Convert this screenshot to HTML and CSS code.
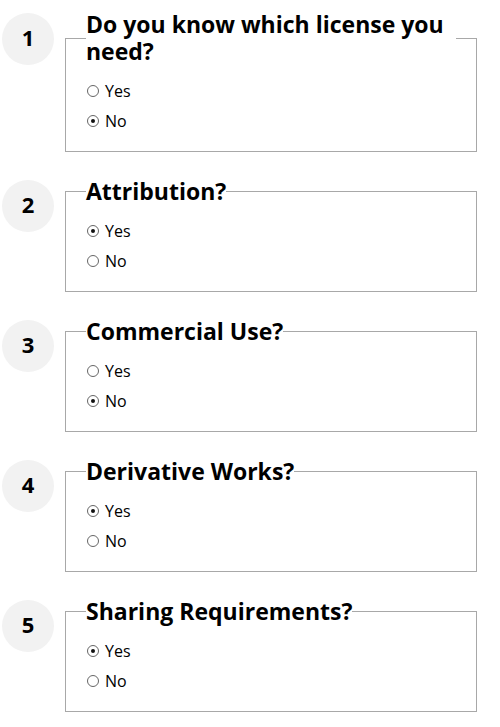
FILE: index.html
```html
<!DOCTYPE html>
<html lang="en">
<head>
<meta charset="utf-8">
<title>License chooser</title>
<link rel="stylesheet" href="styles.css">
</head>
<body>
<form class="steps">
  <div class="step">
    <div class="num">1</div>
    <fieldset class="box">
      <legend class="question">Do you know which license you need?</legend>
      <div class="options">
        <label class="option"><input type="radio" name="q1" class="radio"><span>Yes</span></label>
        <label class="option"><input type="radio" name="q1" class="radio" checked><span>No</span></label>
      </div>
    </fieldset>
  </div>
  <div class="step">
    <div class="num">2</div>
    <fieldset class="box">
      <legend class="question">Attribution?</legend>
      <div class="options">
        <label class="option"><input type="radio" name="q2" class="radio" checked><span>Yes</span></label>
        <label class="option"><input type="radio" name="q2" class="radio"><span>No</span></label>
      </div>
    </fieldset>
  </div>
  <div class="step">
    <div class="num">3</div>
    <fieldset class="box">
      <legend class="question">Commercial Use?</legend>
      <div class="options">
        <label class="option"><input type="radio" name="q3" class="radio"><span>Yes</span></label>
        <label class="option"><input type="radio" name="q3" class="radio" checked><span>No</span></label>
      </div>
    </fieldset>
  </div>
  <div class="step">
    <div class="num">4</div>
    <fieldset class="box">
      <legend class="question">Derivative Works?</legend>
      <div class="options">
        <label class="option"><input type="radio" name="q4" class="radio" checked><span>Yes</span></label>
        <label class="option"><input type="radio" name="q4" class="radio"><span>No</span></label>
      </div>
    </fieldset>
  </div>
  <div class="step">
    <div class="num">5</div>
    <fieldset class="box">
      <legend class="question">Sharing Requirements?</legend>
      <div class="options">
        <label class="option"><input type="radio" name="q5" class="radio" checked><span>Yes</span></label>
        <label class="option"><input type="radio" name="q5" class="radio"><span>No</span></label>
      </div>
    </fieldset>
  </div>
</form>
</body>
</html>
```

FILE: styles.css
```css
html, body {
  margin: 0;
  background: #fff;
  color: #000;
}

.steps {
  display: flex;
  flex-direction: column;
  gap: 26px;
  padding: 11px 23px 0 2px;
}

.step {
  display: flex;
  align-items: flex-start;
  gap: 11px;
}

.num {
  flex: 0 0 52px;
  width: 52px;
  height: 52px;
  box-sizing: border-box;
  padding-bottom: 4px;
  margin-top: 2px;
  border-radius: 50%;
  background: #f2f2f2;
  display: flex;
  align-items: center;
  justify-content: center;
  font-family: "Open Sans", sans-serif;
  font-weight: 700;
  font-size: 22px;
  line-height: 1;
  color: #000;
}

.box {
  flex: 1;
  margin: 0;
  padding: 0 20px 15px;
  border: 1px solid #a8a8a8;
  min-width: 0;
}

.question {
  padding: 0;
  font-family: "Open Sans", sans-serif;
  font-weight: 700;
  font-size: 23px;
  line-height: 27px;
  color: #000;
}

.options {
  display: flex;
  flex-direction: column;
  padding-top: 11px;
}

.option {
  display: flex;
  align-items: center;
  height: 30px;
  gap: 6px;
  font-family: "Open Sans", sans-serif;
  font-size: 16px;
  color: #000;
}

.radio {
  appearance: none;
  -webkit-appearance: none;
  margin: 0 0 0 1px;
  width: 12px;
  height: 12px;
  border: 1px solid #666;
  border-radius: 50%;
  background: #fff;
  display: grid;
  place-items: center;
}

.radio:checked::after {
  content: "";
  width: 4px;
  height: 4px;
  border-radius: 50%;
  background: #111;
}
```
